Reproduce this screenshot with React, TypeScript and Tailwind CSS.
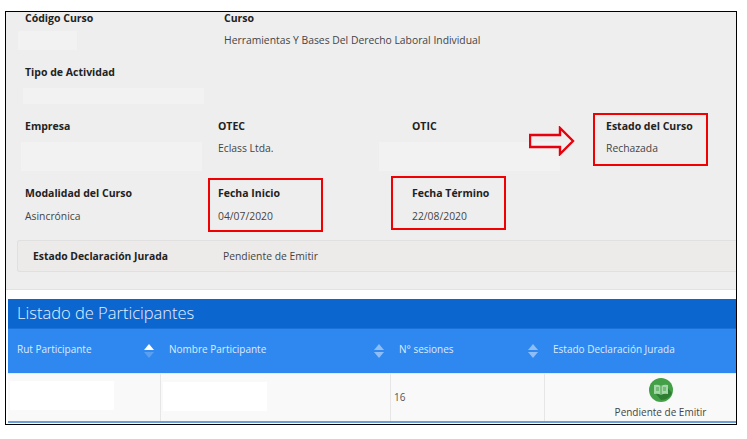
function Label({ children }: { children: React.ReactNode }) {
  return <div className="h-3 text-[10.5px] leading-3 font-bold text-[#222]">{children}</div>;
}

function Value({ children }: { children: React.ReactNode }) {
  return <div className="text-[10.35px] leading-3 text-[#444]">{children}</div>;
}

function SortIcon({ active = false }: { active?: boolean }) {
  return (
    <svg width="10" height="14" viewBox="0 0 10 14" className="shrink-0">
      <path d="M5 0 L10 6 L0 6 Z" fill={active ? '#ffffff' : '#8fbdf5'} />
      <path d="M0 8 L10 8 L5 14 Z" fill={active ? '#5a9ff0' : '#8fbdf5'} />
    </svg>
  );
}

function RedBox({ className }: { className: string }) {
  return <div className={`absolute border-2 border-[#f00000] ${className}`} />;
}

function BookIcon() {
  return (
    <svg width="24" height="24" viewBox="0 0 24 24">
      <circle cx="12" cy="12" r="12" fill="#43a047" />
      <path d="M7 16 L12 22 Q20 22 23 15 L18 9 Z" fill="#2e7d32" />
      <path d="M5 7 Q9 6 12 8 Q15 6 19 7 V16 Q15 15 12 17 Q9 15 5 16 Z" fill="#a5d6a7" />
      <path d="M12 8 V17" stroke="#43a047" strokeWidth="1" />
      <path d="M7 10 H10 M7 12 H10 M14 10 H17 M14 12 H17" stroke="#43a047" strokeWidth="1" />
    </svg>
  );
}

export default function App() {
  return (
    <div className="w-[747px] h-[439px] bg-white pt-[11px] pl-[5px] font-['Open_Sans',sans-serif]">
      <div className="relative w-[732px] h-[414px] border border-black overflow-hidden bg-white">
        {/* Course data */}
        <section className="h-[278px] bg-[#eeeeee] border-b border-[#e2e2e2]">
          <div className="grid grid-cols-[199px_1fr] pl-[19px]">
            <div>
              <Label>Código Curso</Label>
              <div className="mt-[7px] -ml-[7px] w-[59px] h-[19px] bg-[#f2f2f2]" />
            </div>
            <div>
              <Label>Curso</Label>
              <div className="mt-[7px] h-[19px] flex items-center text-[10.35px] text-[#444]">
                Herramientas Y Bases Del Derecho Laboral Individual
              </div>
            </div>
          </div>

          <div className="mt-4 pl-[19px]">
            <Label>Tipo de Actividad</Label>
            <div className="mt-[10px] -ml-[2px] w-[181px] h-4 bg-[#f2f2f2]" />
          </div>

          <div className="mt-4 grid grid-cols-[193px_194px_194px_1fr] pl-[19px]">
            <div>
              <Label>Empresa</Label>
              <div className="mt-[10px] -ml-1 w-[181px] h-[29px] bg-[#f2f2f2]" />
            </div>
            <div>
              <Label>OTEC</Label>
              <div className="mt-[10px]">
                <Value>Eclass Ltda.</Value>
              </div>
            </div>
            <div>
              <Label>OTIC</Label>
              <div className="mt-[10px] -ml-[33px] w-[181px] h-[29px] bg-[#f2f2f2]" />
            </div>
            <div>
              <Label>Estado del Curso</Label>
              <div className="mt-[10px]">
                <Value>Rechazada</Value>
              </div>
            </div>
          </div>

          <div className="mt-4 grid grid-cols-[193px_194px_1fr] pl-[19px]">
            <div>
              <Label>Modalidad del Curso</Label>
              <div className="mt-[11px]">
                <Value>Asincrónica</Value>
              </div>
            </div>
            <div>
              <Label>Fecha Inicio</Label>
              <div className="mt-[11px]">
                <Value>04/07/2020</Value>
              </div>
            </div>
            <div>
              <Label>Fecha Término</Label>
              <div className="mt-[11px]">
                <Value>22/08/2020</Value>
              </div>
            </div>
          </div>

          <div className="mt-[18px] ml-[11px] h-8 flex items-center rounded-l-[3px] border border-r-0 border-[#e0e0e0] bg-[#ecebea] pl-[15px] pt-px">
            <div className="w-[190px] text-[10.35px] font-bold text-[#222]">Estado Declaración Jurada</div>
            <div className="text-[10.35px] text-[#444]">Pendiente de Emitir</div>
          </div>
        </section>

        {/* Participants table */}
        <section className="mt-[9px] ml-[2px]">
          <div className="h-[30px] bg-[#0b66d0] pl-[9px] flex items-center text-[16.5px] font-light text-[#e6f0ff] border-b border-[#1a72d8]">
            Listado de Participantes
          </div>
          <div className="h-11 w-[768px] grid grid-cols-[153px_230px_154px_231px] bg-[#2e88f0] text-[10px] text-[#dcebff]">
            <div className="flex items-center justify-between pl-[9px] pr-[7px]">
              <span className="mb-1">Rut Participante</span>
              <SortIcon active />
            </div>
            <div className="flex items-center justify-between pl-2 pr-[7px]">
              <span className="mb-1">Nombre Participante</span>
              <SortIcon />
            </div>
            <div className="flex items-center justify-between pl-2 pr-[7px]">
              <span className="mb-1">N° sesiones</span>
              <SortIcon />
            </div>
            <div className="flex items-center pl-2">
              <span className="mb-1">Estado Declaración Jurada</span>
            </div>
          </div>
          <div className="h-[50px] w-[768px] grid grid-cols-[153px_230px_154px_231px] bg-[#f9f9f9] border-b-2 border-[#6c9fd6] border-t border-t-[#dcebff]">
            <div className="border-r border-[#e6e6e6] pl-[2px] pt-[7px]">
              <div className="w-[104px] h-[29px] bg-white" />
            </div>
            <div className="border-r border-[#e6e6e6] pl-[2px] pt-2">
              <div className="w-[104px] h-[29px] bg-white" />
            </div>
            <div className="border-r border-[#e6e6e6] pl-[3px] flex items-center text-[10px] text-[#555]">16</div>
            <div className="flex flex-col items-center pt-[4px]">
              <BookIcon />
              <div className="mt-1 text-[10px] leading-3 text-[#444]">Pendiente de Emitir</div>
            </div>
          </div>
        </section>

        {/* Annotations on top of the screenshot */}
        <RedBox className="left-[202px] top-[166px] w-[115px] h-[54px]" />
        <RedBox className="left-[385px] top-[164px] w-[115px] h-[54px]" />
        <RedBox className="left-[587px] top-[101px] w-[115px] h-[53px]" />
        <svg width="46" height="30" viewBox="0 0 46 30" className="absolute left-[523px] top-[114px]">
          <path d="M1 9 H31 V2 L44 15 L31 28 V21 H1 Z" fill="none" stroke="#e8000c" strokeWidth="2.4" />
        </svg>
      </div>
    </div>
  );
}
